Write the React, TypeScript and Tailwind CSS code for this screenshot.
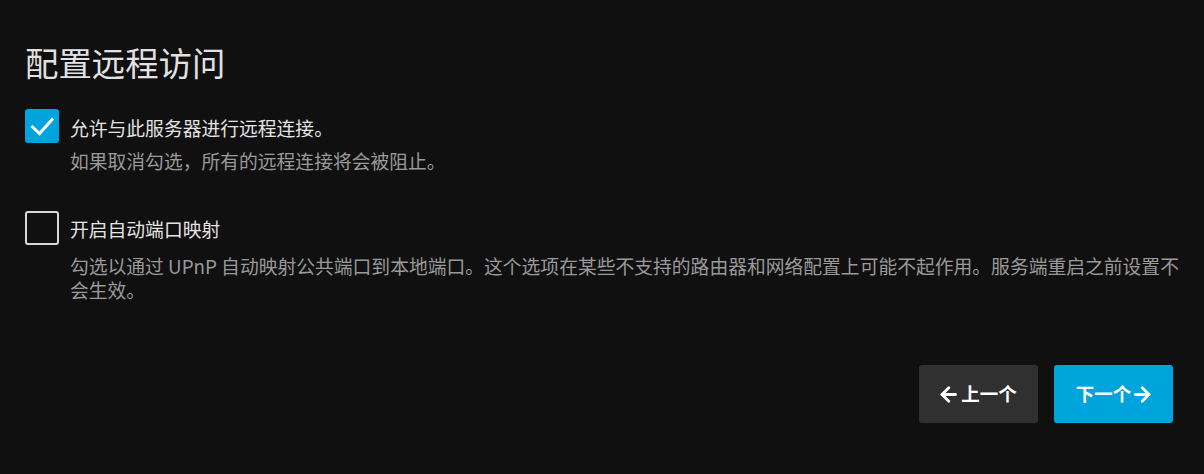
import React from "react";

const font = { fontFamily: '"Noto Sans CJK SC", "Noto Sans", sans-serif' };

function CheckIcon() {
  return (
    <svg width="34" height="34" viewBox="0 0 34 34" fill="none">
      <polyline points="7.5,18 14.5,24.5 27,10.5" stroke="#fff" strokeWidth="3" strokeLinecap="square" strokeLinejoin="miter" />
    </svg>
  );
}

function ArrowBack() {
  return (
    <svg width="17" height="17" viewBox="0 0 17 17" fill="none" stroke="currentColor" strokeWidth="2.8" strokeLinecap="round" strokeLinejoin="round">
      <path d="M15.5 8.5H2" />
      <path d="M8.8 1.8L2 8.5l6.8 6.7" />
    </svg>
  );
}

function ArrowForward() {
  return (
    <svg width="17" height="17" viewBox="0 0 17 17" fill="none" stroke="currentColor" strokeWidth="2.8" strokeLinecap="round" strokeLinejoin="round">
      <path d="M1.5 8.5H15" />
      <path d="M8.2 1.8L15 8.5l-6.8 6.7" />
    </svg>
  );
}

export default function App() {
  return (
    <div className="w-[1204px] h-[474px] bg-[#101010] pl-[25px] pr-[31px] pt-[42px] overflow-hidden" style={font}>
      <h1 className="text-[33.4px] leading-[40px] text-[#e2e2e2] font-normal">配置远程访问</h1>

      <div className="mt-[27px]">
        <div className="flex items-center gap-[11px]">
          <div className="w-[34px] h-[34px] rounded-[3px] bg-[#00a4dc] shrink-0">
            <CheckIcon />
          </div>
          <span className="text-[18.8px] leading-[24px] text-[#e4e4e4] pt-[4px]">允许与此服务器进行远程连接。</span>
        </div>
        <p className="mt-[6px] ml-[45px] text-[18.8px] leading-[24px] text-[#9a9a9a]">如果取消勾选，所有的远程连接将会被阻止。</p>
      </div>

      <div className="mt-[38px]">
        <div className="flex items-center gap-[11px]">
          <div className="w-[34px] h-[34px] rounded-[3px] border-2 border-[#d8d8d8] shrink-0" />
          <span className="text-[18.8px] leading-[24px] text-[#e4e4e4] pt-[2px]">开启自动端口映射</span>
        </div>
        <div className="mt-[9px] ml-[45px] w-[1125px] text-[18.8px] leading-[24px] text-[#9a9a9a]">
          <p>勾选以通过 UPnP 自动映射公共端口到本地端口。这个选项在某些不支持的路由器和网络配置上可能不起作用。服务端重启之前设置不</p>
          <p>会生效。</p>
        </div>
      </div>

      <div className="mt-[63px] flex justify-end gap-[16px]">
        <button className="w-[119px] h-[58px] rounded-[3px] bg-[#303030] text-white flex items-center justify-center gap-[4px] text-[18.5px] font-bold">
          <ArrowBack />
          <span>上一个</span>
        </button>
        <button className="w-[119px] h-[58px] rounded-[3px] bg-[#00a4dc] text-white flex items-center justify-center gap-[3px] text-[18.5px] font-bold">
          <span>下一个</span>
          <ArrowForward />
        </button>
      </div>
    </div>
  );
}
